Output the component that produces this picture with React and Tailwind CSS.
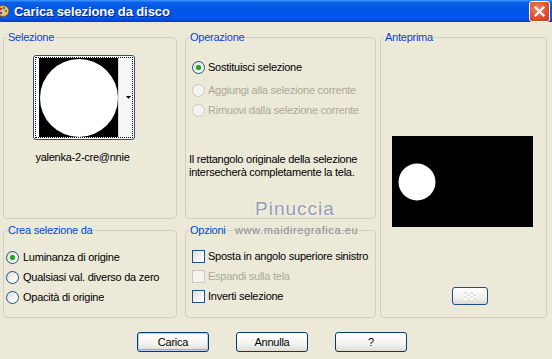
import React from 'react';

// XP-style "Carica selezione da disco" dialog

const font = { fontFamily: '"Liberation Sans", Arial, sans-serif' };

const Radio = ({ checked = false, disabled = false }) => (
  <span
    className={`shrink-0 flex items-center justify-center w-[13px] h-[13px] rounded-full border ${
      disabled
        ? 'border-[#cac8bb] bg-[#f4f3ee]'
        : 'border-[#1c5180] bg-[linear-gradient(135deg,#dcdbd5_0%,#ffffff_80%)]'
    }`}
  >
    {checked && <span className="w-[5px] h-[5px] rounded-full bg-[#21a121] shadow-[0_0_1px_#7fd07f]" />}
  </span>
);

const Check = ({ disabled = false }) => (
  <span
    className={`shrink-0 w-[13px] h-[13px] border ${
      disabled
        ? 'border-[#cac8bb] bg-[#f4f3ee]'
        : 'border-[#1c5180] bg-[linear-gradient(135deg,#dcdbd5_0%,#ffffff_85%)]'
    }`}
  />
);

const Group = ({ title, className, children }) => (
  <fieldset className={`border border-[#d0d0bf] rounded-[4px] ${className}`}>
    <legend className="ml-[3px] px-[1px] text-[11px] leading-[13px] text-[#0046d5]">{title}</legend>
    {children}
  </fieldset>
);

const XpButton = ({ label, isDefault = false }) => (
  <button
    type="button"
    className={`w-[72px] h-[20px] rounded-[3px] border border-[#003c74] text-[11px] text-black bg-[linear-gradient(180deg,#ffffff_0%,#f4f3ee_60%,#dedcd2_100%)] ${
      isDefault ? 'shadow-[inset_0_0_0_1px_#b9d1fa,inset_0_-1px_0_1px_#8aaef0]' : ''
    }`}
  >
    {label}
  </button>
);

export default function App() {
  return (
    <div style={font} className="relative w-[552px] h-[359px] overflow-hidden bg-[#ece9d8] text-[11px] leading-[13px] tracking-[-0.25px] whitespace-nowrap text-black">
      {/* title bar */}
      <div className="h-[22px] flex items-center bg-[linear-gradient(180deg,#3d95ff_0%,#0a5fe8_12%,#0055e5_45%,#0058ee_80%,#0040c0_100%)]">
        <svg width="12" height="14" viewBox="0 0 12 14" className="-ml-[2px] mr-[4px]">
          <ellipse cx="5" cy="7" rx="6" ry="5.5" fill="#e7c46b" stroke="#8a5a1c" strokeWidth="1" />
          <circle cx="3" cy="5" r="1.3" fill="#d8352a" />
          <circle cx="6" cy="4" r="1.2" fill="#2a7ad8" />
          <circle cx="8" cy="7" r="1.2" fill="#2aa84a" />
          <circle cx="3" cy="9" r="1.2" fill="#6a2ad8" />
        </svg>
        <span className="text-[13px] tracking-[-0.1px] font-bold text-white [text-shadow:1px_1px_0_#0a1f7a]">Carica selezione da disco</span>
        <div className="ml-auto mr-[2px] w-[21px] h-[21px] rounded-[3px] border border-white bg-[radial-gradient(circle_at_40%_35%,#f08a6a_0%,#e0502c_55%,#c1381a_100%)] flex items-center justify-center">
          <svg width="11" height="11" viewBox="0 0 11 11">
            <path d="M1.5 1.5 L9.5 9.5 M9.5 1.5 L1.5 9.5" stroke="#fff" strokeWidth="2.2" strokeLinecap="square" />
          </svg>
        </div>
      </div>

      {/* groups */}
      <div className="flex pl-[3px] pt-[9px]">
        <div className="w-[174px] flex flex-col gap-[5px]">
          <Group title="Selezione" className="h-[188px]">
            <div className="ml-[29px] mt-[11px] w-[102px] flex flex-col items-center">
              <div className="w-[102px] h-[85px] rounded-[3px] border border-[#2f4f7f] bg-white p-[1px]">
                <div className="h-full border border-dotted border-black flex items-center pl-[3px]">
                  <svg width="79" height="79" viewBox="0 0 79 79" className="shrink-0">
                    <rect width="79" height="79" fill="#000" />
                    <circle cx="40" cy="40" r="39" fill="#fff" />
                  </svg>
                  <div className="h-full flex-1 border-l border-[#d8d8d8] bg-[#f7f7f7] flex items-center justify-end pr-[1px]">
                    <svg width="5" height="3" viewBox="0 0 5 3">
                      <path d="M0 0 H5 L2.5 3 Z" fill="#000" />
                    </svg>
                  </div>
                </div>
              </div>
              <div className="mt-[11px] -ml-[3px]">yalenka-2-cre@nnie</div>
            </div>
          </Group>
          <Group title="Crea selezione da" className="h-[94px]">
            <div className="mt-[10px] pl-[2px] flex flex-col">
              <div className="h-[20px] flex items-center gap-[4px]"><Radio checked /><span>Luminanza di origine</span></div>
              <div className="h-[20px] flex items-center gap-[4px]"><Radio /><span>Qualsiasi val. diverso da zero</span></div>
              <div className="h-[20px] flex items-center gap-[4px]"><Radio /><span>Opacità di origine</span></div>
            </div>
          </Group>
        </div>

        <div className="ml-[8px] w-[191px] flex flex-col gap-[5px]">
          <Group title="Operazione" className="h-[188px]">
            <div className="pl-[6px] flex flex-col">
              <div className="mt-[13px] h-[20px] flex items-center gap-[3px]"><Radio checked /><span>Sostituisci selezione</span></div>
              <div className="mt-[3px] h-[20px] flex items-center gap-[3px] text-[#aca899]"><Radio disabled /><span>Aggiungi alla selezione corrente</span></div>
              <div className="h-[20px] flex items-center gap-[3px] text-[#aca899]"><Radio disabled /><span>Rimuovi dalla selezione corrente</span></div>
            </div>
            <p className="mt-[33px] pl-[3px] leading-[13px]">
              Il rettangolo originale della selezione
              <br />
              intersecherà completamente la tela.
            </p>
          </Group>
          <Group title="Opzioni" className="h-[94px]">
            <div className="mt-[9px] pl-[6px] flex flex-col">
              <div className="h-[20px] flex items-center gap-[3px]"><Check /><span>Sposta in angolo superiore sinistro</span></div>
              <div className="h-[20px] flex items-center gap-[3px] text-[#aca899]"><Check disabled /><span>Espandi sulla tela</span></div>
              <div className="h-[20px] flex items-center gap-[3px]"><Check /><span>Inverti selezione</span></div>
            </div>
          </Group>
        </div>

        <Group title="Anteprima" className="ml-[4px] w-[167px] h-[287px]">
          <svg width="141" height="91" viewBox="0 0 141 91" className="ml-[11px] mt-[92px] block">
            <rect width="141" height="91" fill="#000" />
            <circle cx="25" cy="46" r="18.5" fill="#fff" />
          </svg>
          <div className="ml-[71px] mt-[60px] w-[36px] h-[18px] rounded-[3px] border border-[#1c4f8a] bg-[linear-gradient(180deg,#ffffff_0%,#f1f0ea_60%,#dcdad0_100%)] flex items-center justify-center">
            <div className="w-[12px] h-[8px] bg-[conic-gradient(#ffffff_25%,#e4e4e0_0_50%,#ffffff_0_75%,#e4e4e0_0)] bg-[length:6px_4px]" />
          </div>
        </Group>
      </div>

      {/* buttons */}
      <div className="mt-[14px] pl-[137px] flex gap-[27px]">
        <XpButton label="Carica" isDefault />
        <XpButton label="Annulla" />
        <XpButton label="?" />
      </div>

      {/* watermark */}
      <div className="absolute left-[255px] top-[199px] text-[19px] leading-[20px] tracking-[1px] text-[#959bb6] [text-shadow:0_0_2px_#ffffff]">Pinuccia</div>
      <div className="absolute left-[235px] top-[224px] text-[11px] leading-[12px] tracking-[0.6px] text-[#8d8d9a]">www.maidiregrafica.eu</div>
    </div>
  );
}
